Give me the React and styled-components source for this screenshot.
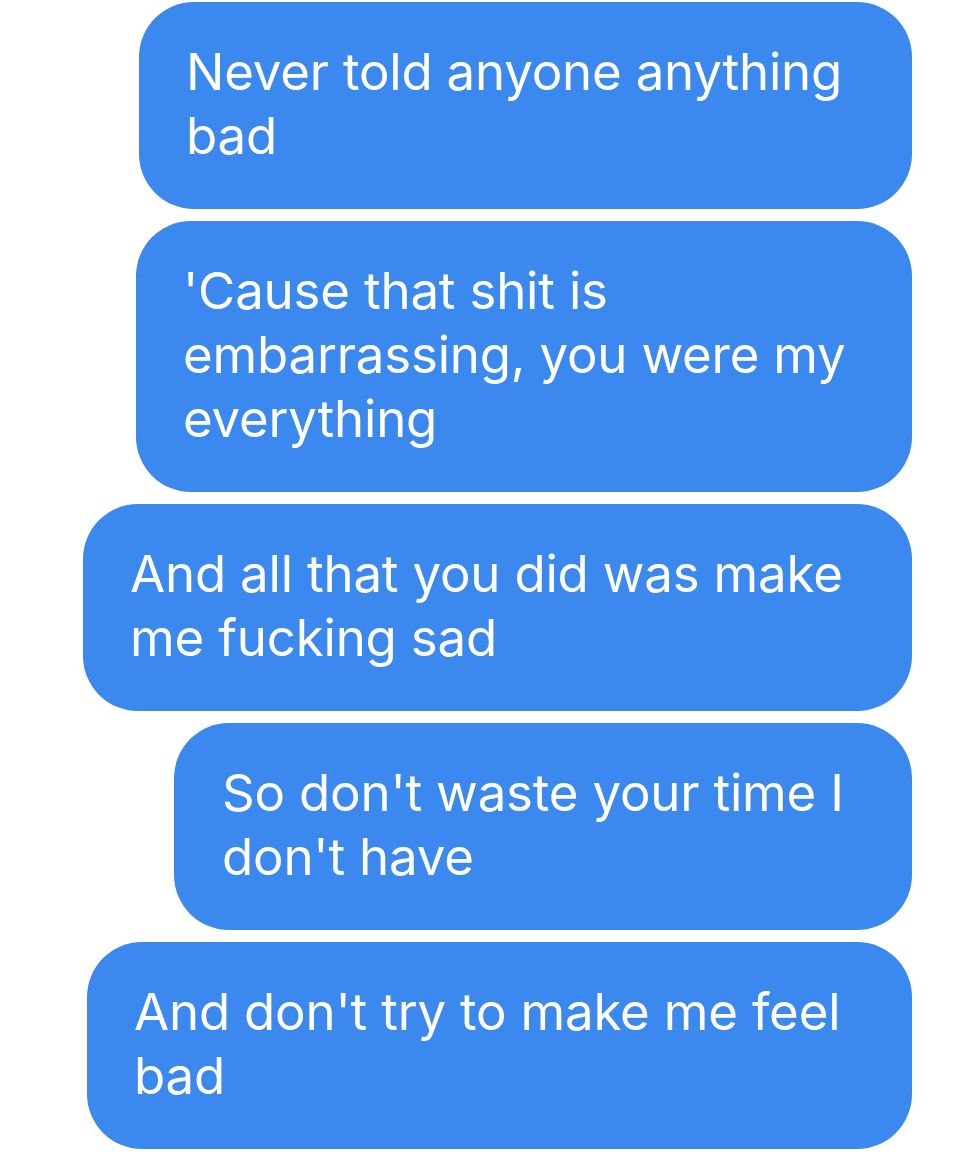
import React from "react";
import styled, { createGlobalStyle } from "styled-components";

const Global = createGlobalStyle`
  html, body { margin: 0; padding: 0; background: #ffffff; }
  body { font-family: Inter, "Liberation Sans", Arial, sans-serif; }
`;

const Thread = styled.div`
  display: flex;
  flex-direction: column;
  align-items: flex-end;
  gap: 12px;
  padding: 2px 48px 0 0;
`;

const Bubble = styled.div`
  box-sizing: border-box;
  width: ${(p) => p.$w}px;
  background: #3b88ee;
  color: #ffffff;
  border-radius: 55px;
  padding: 38px 0 41px ${(p) => p.$pl || 47}px;
  font-size: 51px;
  line-height: 64px;
  letter-spacing: -0.2px;
  font-weight: 400;
`;

const Line = styled.div`
  white-space: nowrap;
`;

const messages = [
  { w: 773, lines: ["Never told anyone anything", "bad"] },
  { w: 776, lines: ["'Cause that shit is", "embarrassing, you were my", "everything"] },
  { w: 829, lines: ["And all that you did was make", "me fucking sad"] },
  { w: 738, lines: ["So don't waste your time I", "don't have"], pl: 48 },
  { w: 825, lines: ["And don't try to make me feel", "bad"] },
];

export default function App() {
  return (
    <>
      <Global />
      <Thread>
        {messages.map((m, i) => (
          <Bubble key={i} $w={m.w} $pl={m.pl}>
            {m.lines.map((l, j) => (
              <Line key={j}>{l}</Line>
            ))}
          </Bubble>
        ))}
      </Thread>
    </>
  );
}
